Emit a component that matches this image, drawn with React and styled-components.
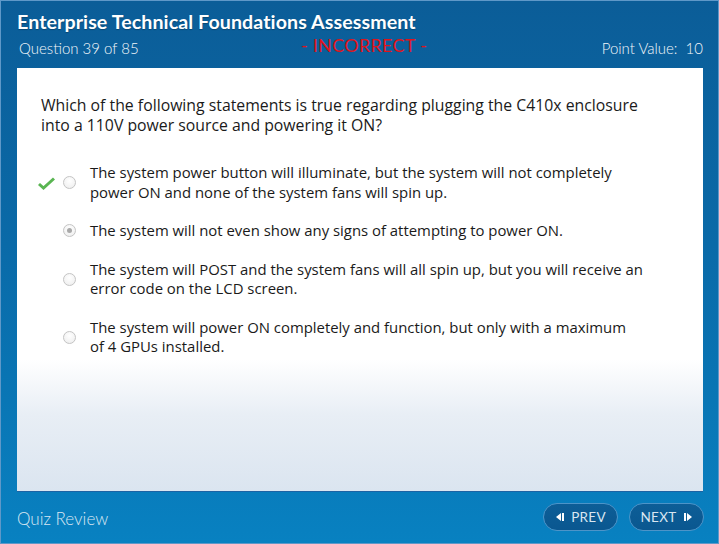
import React from "react";
import styled, { createGlobalStyle } from "styled-components";

const Global = createGlobalStyle`
  html, body { margin: 0; padding: 0; }
  body { width: 719px; height: 544px; overflow: hidden; font-family: "Open Sans", "Liberation Sans", sans-serif; }
`;

const Frame = styled.div`
  width: 719px;
  height: 544px;
  box-sizing: border-box;
  border: 1px solid #5f98c8;
  background: linear-gradient(180deg, #0b5d98 0%, #0a6aa8 45%, #0881c1 100%);
  display: flex;
  flex-direction: column;
`;

const Header = styled.header`
  height: 67px;
  box-sizing: border-box;
  padding: 9px 15px 0 16px;
  color: #fff;
`;

const Title = styled.h1`
  margin: 0;
  font-family: "Lato", "Open Sans", sans-serif;
  font-weight: 700;
  font-size: 19.6px;
  line-height: 24px;
  letter-spacing: 0.1px;
  text-shadow: 0 1px 1px rgba(0,0,0,0.25);
`;

const SubRow = styled.div`
  display: grid;
  grid-template-columns: 1fr auto 1fr;
  align-items: center;
  margin-top: 2px;
  height: 24px;
`;

const SubText = styled.span`
  font-family: "Lato", "Open Sans", sans-serif;
  font-weight: 300;
  font-size: 15px;
  color: #f2f6fa;
  justify-self: ${p => (p.$right ? "end" : "start")};
  padding-left: ${p => (p.$right ? "0" : "2px")};
`;

const Status = styled.span`
  font-family: "Lato", "Open Sans", sans-serif;
  font-weight: 400;
  font-size: 18px;
  color: #e0141b;
  letter-spacing: 0.3px;
  margin-top: -6px;
  margin-left: 8px;
`;

const Panel = styled.main`
  margin: 0 15px 0 16px;
  height: 424px;
  box-sizing: border-box;
  background: linear-gradient(180deg, #ffffff 0%, #ffffff 69%, #e8eef5 82%, #dbe5f0 100%);
  border-bottom: 1px solid #1c63a4;
  padding: 27px 30px 0 24px;
`;

const Question = styled.p`
  margin: 0 0 28px 0;
  font-size: 15.8px;
  line-height: 20px;
  color: #1a1a1a;
  max-width: 625px;
`;

const Options = styled.ul`
  list-style: none;
  margin: 0;
  padding: 0;
  display: flex;
  flex-direction: column;
  gap: 19px;
`;

const Option = styled.li`
  display: grid;
  grid-template-columns: 22px 27px 1fr;
  align-items: center;
  font-size: 14.9px;
  line-height: 19.5px;
  color: #1a1a1a;
`;

const Check = styled.span`
  display: flex;
  align-items: center;
  justify-content: flex-start;
  margin-left: -3px;
  margin-top: 1px;
`;

const Radio = styled.span`
  width: 11px;
  height: 11px;
  border-radius: 50%;
  border: 1px solid #c4c4c4;
  background: radial-gradient(circle at 50% 35%, #ffffff 0%, #ececec 100%);
  display: flex;
  align-items: center;
  justify-content: center;
  box-sizing: content-box;
  &::after {
    content: "";
    width: 5px;
    height: 5px;
    border-radius: 50%;
    background: ${p => (p.$selected ? "#a9a9a9" : "transparent")};
  }
`;

const OptionText = styled.span`
  white-space: nowrap;
`;

const Footer = styled.footer`
  flex: 1;
  display: flex;
  align-items: center;
  justify-content: space-between;
  padding: 0 14px 0 16px;
`;

const FooterLabel = styled.span`
  font-family: "Lato", "Open Sans", sans-serif;
  font-weight: 300;
  font-size: 17px;
  color: #d8e6f2;
  margin-top: 1px;
`;

const NavGroup = styled.div`
  display: flex;
  gap: 11px;
  margin-top: -1px;
`;

const NavButton = styled.button`
  width: 75px;
  height: 28px;
  border-radius: 14px;
  border: 1px solid #4d94c8;
  background: linear-gradient(180deg, #0d5e97 0%, #0a5790 100%);
  color: #d9e6f1;
  font-family: "Lato", "Open Sans", sans-serif;
  font-size: 13.5px;
  letter-spacing: 0.3px;
  display: flex;
  align-items: center;
  justify-content: center;
  gap: 6px;
  padding: 0;
`;

const NavIcon = ({ dir }) => (
  <svg width="10" height="10" viewBox="0 0 10 10">
    {dir === "prev" ? (
      <>
        <rect x="7" y="1" width="2" height="8" fill="#fff" />
        <polygon points="6,1 6,9 1,5" fill="#fff" />
      </>
    ) : (
      <>
        <rect x="1" y="1" width="2" height="8" fill="#fff" />
        <polygon points="4,1 4,9 9,5" fill="#fff" />
      </>
    )}
  </svg>
);

const CheckMark = () => (
  <svg width="17" height="13" viewBox="0 0 17 13">
    <path d="M1 7 L5.5 11 L16 1.5" stroke="#5ab552" strokeWidth="3" fill="none" strokeLinejoin="miter" />
  </svg>
);

const options = [
  { lines: ["The system power button will illuminate, but the system will not completely", "power ON and none of the system fans will spin up."], correct: true },
  { lines: ["The system will not even show any signs of attempting to power ON."], selected: true },
  { lines: ["The system will POST and the system fans will all spin up, but you will receive an", "error code on the LCD screen."] },
  { lines: ["The system will power ON completely and function, but only with a maximum", "of 4 GPUs installed."] },
];

export default function App() {
  return (
    <>
      <Global />
      <Frame>
        <Header>
          <Title>Enterprise Technical Foundations Assessment</Title>
          <SubRow>
            <SubText>Question 39 of 85</SubText>
            <Status>- INCORRECT -</Status>
            <SubText $right>Point Value:&nbsp; 10</SubText>
          </SubRow>
        </Header>
        <Panel>
          <Question>
            Which of the following statements is true regarding plugging the C410x enclosure into a 110V power source and powering it ON?
          </Question>
          <Options>
            {options.map((o, i) => (
              <Option key={i}>
                <Check>{o.correct ? <CheckMark /> : null}</Check>
                <Radio $selected={o.selected} />
                <OptionText>
                  {o.lines.map((l, j) => (
                    <React.Fragment key={j}>
                      {j > 0 && <br />}
                      {l}
                    </React.Fragment>
                  ))}
                </OptionText>
              </Option>
            ))}
          </Options>
        </Panel>
        <Footer>
          <FooterLabel>Quiz Review</FooterLabel>
          <NavGroup>
            <NavButton><NavIcon dir="prev" />PREV</NavButton>
            <NavButton>NEXT<NavIcon dir="next" /></NavButton>
          </NavGroup>
        </Footer>
      </Frame>
    </>
  );
}
